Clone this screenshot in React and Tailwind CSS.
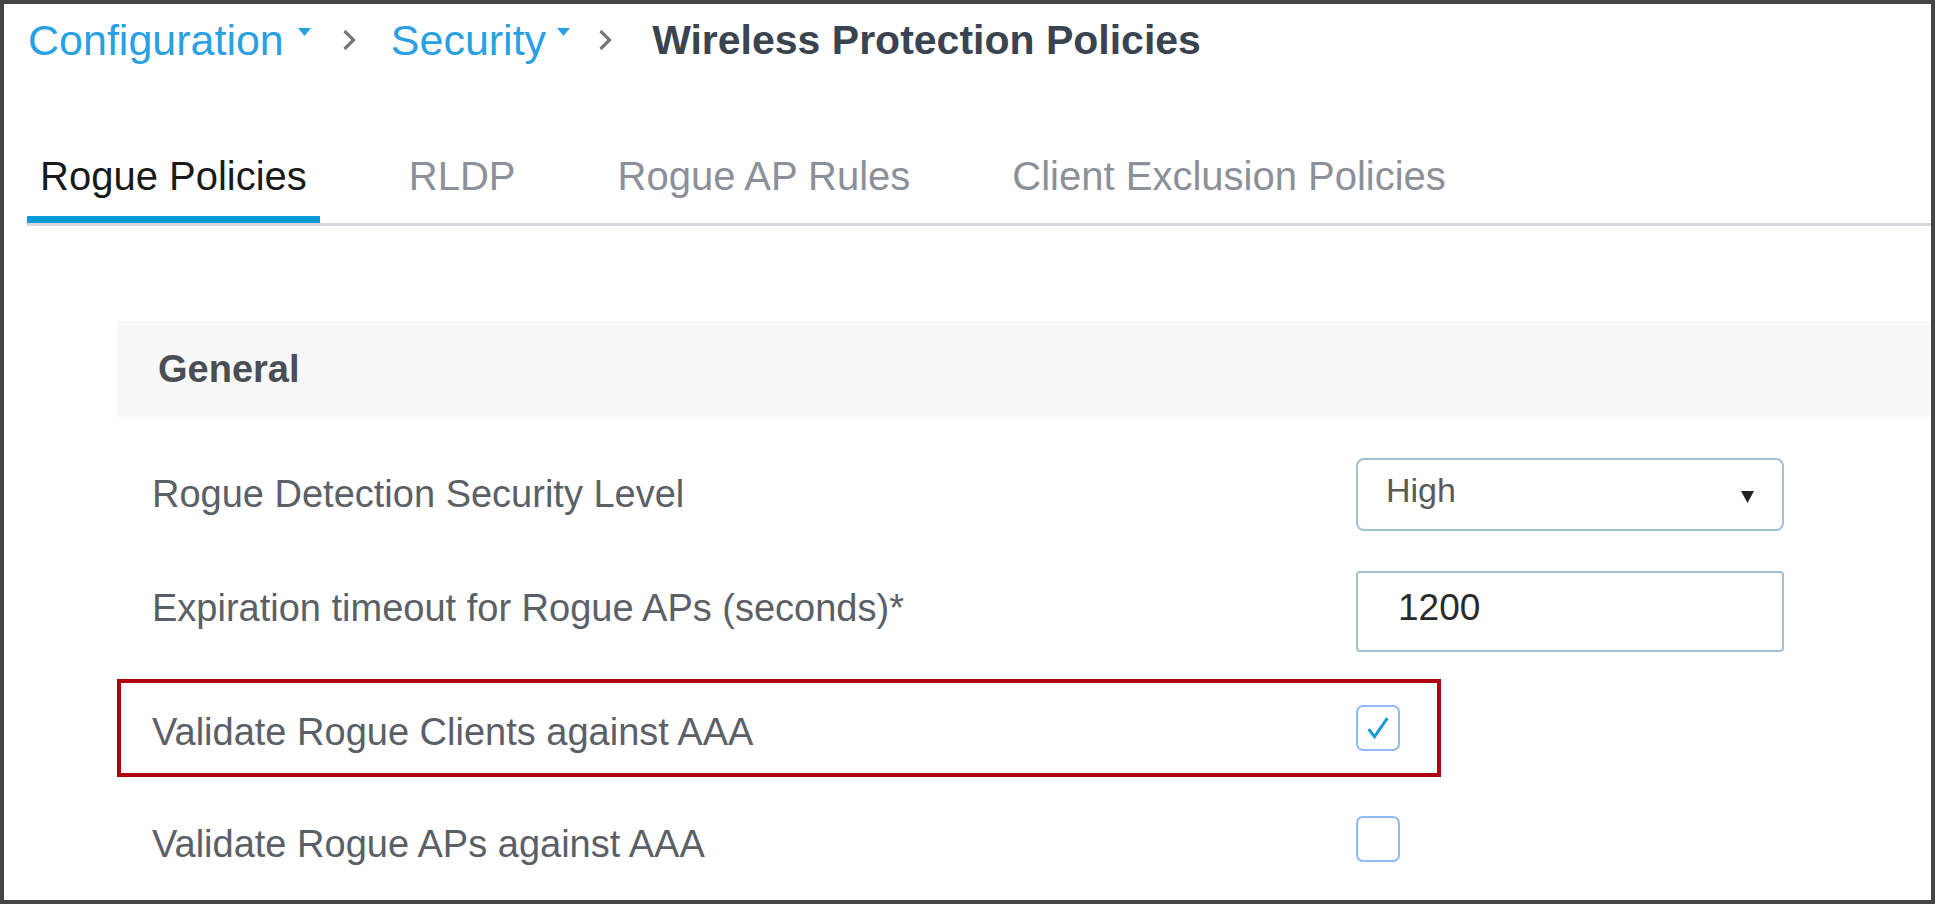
import React from 'react';

const font = { fontFamily: '"Liberation Sans", Arial, sans-serif' };

function Caret() {
  return (
    <svg className="w-[13px] h-[8px] mb-[17px]" viewBox="0 0 13 8">
      <polygon points="0,0 13,0 6.5,8" fill="#2aa0e4" />
    </svg>
  );
}

function Chevron() {
  return (
    <svg className="w-[14px] h-[22px]" viewBox="0 0 14 22" fill="none">
      <polyline points="2.5,2 11.5,11 2.5,20" stroke="#777777" strokeWidth="3.2" />
    </svg>
  );
}

function Checkbox({ checked }) {
  return (
    <div className="w-[44px] h-[46px] rounded-[7px] border-2 border-[#8fb9f7] flex items-center justify-center">
      {checked && (
        <svg className="w-[28px] h-[28px]" viewBox="0 0 24 24" fill="none">
          <polyline points="4,13 9,19.5 20,3.5" stroke="#1b9ad6" strokeWidth="2.6" />
        </svg>
      )}
    </div>
  );
}

const tabs = ['Rogue Policies', 'RLDP', 'Rogue AP Rules', 'Client Exclusion Policies'];

export default function App() {
  return (
    <div style={font} className="w-full h-[904px] border-4 border-[#454545] bg-white overflow-hidden">
      {/* breadcrumb */}
      <div className="h-[72px] pl-[24px] flex items-center text-[43px] leading-[48px]">
        <span className="text-[#2aa0e4]">Configuration</span>
        <span className="ml-[14px] flex"><Caret /></span>
        <span className="ml-[31px] flex"><Chevron /></span>
        <span className="ml-[35px] text-[#2aa0e4]">Security</span>
        <span className="ml-[11px] flex"><Caret /></span>
        <span className="ml-[28px] flex"><Chevron /></span>
        <span className="ml-[40px] text-[41px] font-bold text-[#3a4450]">Wireless Protection Policies</span>
      </div>

      {/* tabs */}
      <div className="ml-[23px] flex gap-[76px] border-b-[3px] border-[#d6d6dc]">
        {tabs.map((t, i) => (
          <div
            key={t}
            className={
              i === 0
                ? 'pt-[76px] pb-[16px] px-[13px] border-b-[7px] border-[#0a9ad8] text-[40px] leading-[48px] text-[#1a1a1a]'
                : 'pt-[76px] pb-[16px] px-[13px] border-b-[7px] border-transparent text-[40px] leading-[48px] text-[#8b9099]'
            }
          >
            {t}
          </div>
        ))}
      </div>

      {/* section header */}
      <div className="mt-[95px] ml-[113px] h-[96px] bg-[#f8f8f8] flex items-center pl-[41px]">
        <span className="text-[38px] font-bold text-[#4a4f55]">General</span>
      </div>

      {/* rows */}
      <div className="mt-[41px] ml-[113px] pl-[35px] h-[73px] flex items-center text-[38px] text-[#5b6066]">
        <span className="w-[1204px]">Rogue Detection Security Level</span>
        <div className="w-[428px] h-[73px] rounded-[8px] border-2 border-[#a3c0d3] flex items-center justify-between pl-[28px] pr-[28px]">
          <span className="text-[34px] text-[#5a5a5a] mb-[9px]">High</span>
          <svg className="w-[13px] h-[12px] mt-[5px]" viewBox="0 0 13 12">
            <polygon points="0,0 13,0 6.5,12" fill="#222" />
          </svg>
        </div>
      </div>

      <div className="mt-[40px] ml-[113px] pl-[35px] h-[81px] flex items-center text-[38px] text-[#5b6066]">
        <span className="w-[1204px] mb-[6px]">Expiration timeout for Rogue APs (seconds)*</span>
        <div className="w-[428px] h-[81px] rounded-[4px] border-2 border-[#a3c0d3] flex items-center pl-[40px]">
          <span className="text-[37px] text-[#2a2a2a] mb-[7px]">1200</span>
        </div>
      </div>

      <div className="mt-[27px] ml-[113px] w-[1324px] h-[98px] border-4 border-[#b3000f] pl-[31px] flex items-center text-[38px] text-[#5b6066]">
        <span className="w-[1204px] mt-[8px]">Validate Rogue Clients against AAA</span>
        <Checkbox checked />
      </div>

      <div className="mt-[39px] ml-[113px] pl-[35px] h-[46px] flex items-center text-[38px] text-[#5b6066]">
        <span className="w-[1204px] mt-[11px]">Validate Rogue APs against AAA</span>
        <Checkbox />
      </div>
    </div>
  );
}
